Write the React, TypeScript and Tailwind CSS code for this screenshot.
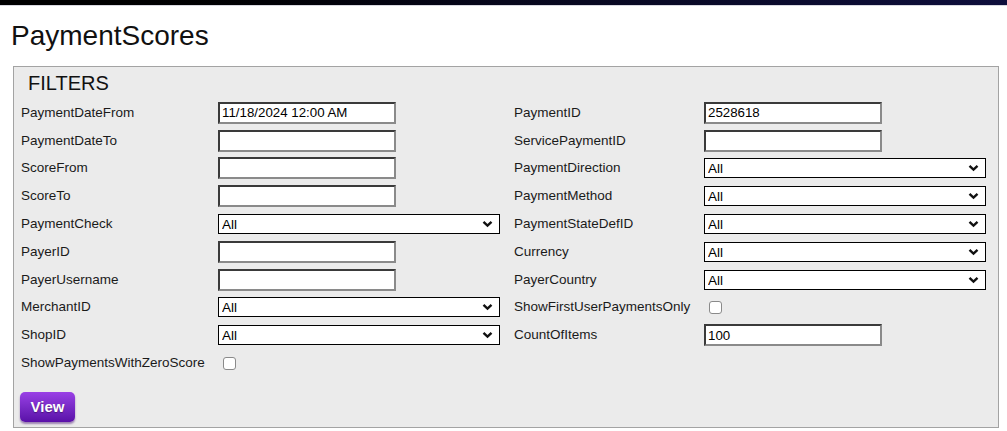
import React from 'react'

type Field =
  | { label: string; kind: 'input'; value?: string }
  | { label: string; kind: 'select' }
  | { label: string; kind: 'check' }

const leftFields: Field[] = [
  { label: 'PaymentDateFrom', kind: 'input', value: '11/18/2024 12:00 AM' },
  { label: 'PaymentDateTo', kind: 'input' },
  { label: 'ScoreFrom', kind: 'input' },
  { label: 'ScoreTo', kind: 'input' },
  { label: 'PaymentCheck', kind: 'select' },
  { label: 'PayerID', kind: 'input' },
  { label: 'PayerUsername', kind: 'input' },
  { label: 'MerchantID', kind: 'select' },
  { label: 'ShopID', kind: 'select' },
  { label: 'ShowPaymentsWithZeroScore', kind: 'check' },
]

const rightFields: Field[] = [
  { label: 'PaymentID', kind: 'input', value: '2528618' },
  { label: 'ServicePaymentID', kind: 'input' },
  { label: 'PaymentDirection', kind: 'select' },
  { label: 'PaymentMethod', kind: 'select' },
  { label: 'PaymentStateDefID', kind: 'select' },
  { label: 'Currency', kind: 'select' },
  { label: 'PayerCountry', kind: 'select' },
  { label: 'ShowFirstUserPaymentsOnly', kind: 'check' },
  { label: 'CountOfItems', kind: 'input', value: '100' },
]

function Chevron() {
  return (
    <svg width="11" height="8" viewBox="0 0 11 8" className="shrink-0 mr-[6px]">
      <path d="M1.5 1.8 L5.5 5.6 L9.5 1.8" fill="none" stroke="#111" strokeWidth="2.4" />
    </svg>
  )
}

function Control({ field }: { field: Field }) {
  if (field.kind === 'input') {
    return (
      <input
        type="text"
        defaultValue={field.value ?? ''}
        className="w-[178px] h-[22px] bg-white px-[2px] text-[13.3px] text-black border-2 border-t-[#3a3a3a] border-l-[#3a3a3a] border-r-[#8a8a8a] border-b-[#8a8a8a] outline-none"
      />
    )
  }
  if (field.kind === 'select') {
    return (
      <div className="w-[282px] h-[20px] bg-white border border-black flex items-center">
        <select className="flex-1 h-full appearance-none bg-transparent pl-[3px] text-[13.5px] text-black outline-none">
          <option>All</option>
        </select>
        <Chevron />
      </div>
    )
  }
  return (
    <input
      type="checkbox"
      className="appearance-none w-[13px] h-[13px] ml-[5px] mt-[1px] bg-white border border-[#8a8a8a] rounded-[3px]"
    />
  )
}

function Column({ fields, labelWidth, width }: { fields: Field[]; labelWidth: string; width: string }) {
  return (
    <div className={`flex flex-col ${width}`}>
      {fields.map((f) => (
        <div key={f.label} className="h-[27.8px] flex items-center">
          <div className={`${labelWidth} text-[13.5px] text-[#1a1a1a]`}>{f.label}</div>
          <Control field={f} />
        </div>
      ))}
    </div>
  )
}

export default function App() {
  return (
    <div className="min-h-screen bg-white font-['Liberation_Sans',Arial,sans-serif]">
      <div className="h-[5px] bg-gradient-to-r from-black via-[#07071c] to-[#0e0e3c]" />
      <div className="h-px bg-[#d8d8e0]" />
      <h1 className="mt-[14px] ml-[11px] text-[28px] leading-[32px] text-[#111]">PaymentScores</h1>

      <div className="mt-[14px] ml-[13px] mr-[8px] border border-[#a3a3a3] bg-[#ebebeb] pt-[5px] pb-[5px]">
        <div className="pl-[14px] text-[20px] leading-[23px] text-[#111]">FILTERS</div>

        <div className="mt-[4px] pl-[7px] flex">
          <Column fields={leftFields} labelWidth="w-[197px]" width="w-[493px]" />
          <Column fields={rightFields} labelWidth="w-[190px]" width="w-[480px]" />
        </div>

        <div className="mt-[15px] pl-[6px]">
          <button className="w-[55px] h-[30px] rounded-[5px] bg-gradient-to-b from-[#9a40e6] to-[#5a10a8] text-white font-bold text-[15px] shadow-[0_2px_2px_rgba(60,0,110,0.45)] [text-shadow:0_1px_1px_rgba(0,0,0,0.35)]">
            View
          </button>
        </div>
      </div>
    </div>
  )
}
